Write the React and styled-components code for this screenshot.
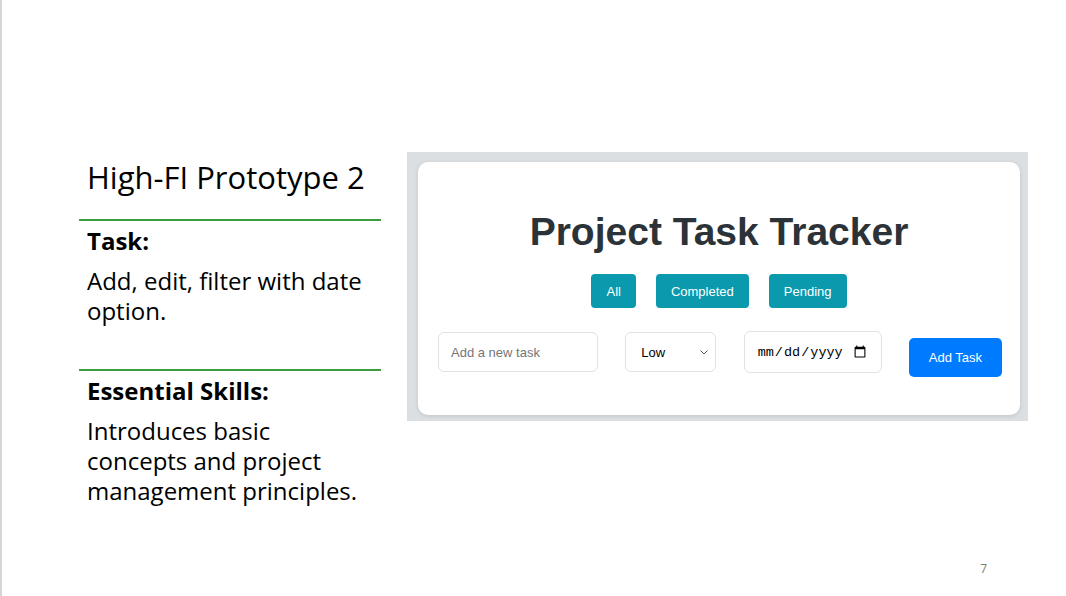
import React, { useState } from 'react';
import styled, { createGlobalStyle } from 'styled-components';

const GlobalStyle = createGlobalStyle`
    body {
        margin: 0;
        background: #fff;
    }
    * {
        box-sizing: border-box;
    }
`;

const Slide = styled.div`
    width: 1066px;
    height: 596px;
    border-left: 2px solid #d6d6d6;
    display: flex;
    flex-direction: column;
    font-family: 'Open Sans', 'Noto Sans', sans-serif;
    color: #000;
    background: #fff;
`;

const Main = styled.div`
    display: flex;
    align-items: flex-start;
    gap: 26px;
    padding: 152px 0 0 77px;
`;

const TextColumn = styled.div`
    width: 302px;
    margin-top: 7px;
`;

const SlideTitle = styled.h1`
    margin: 0;
    padding-left: 8px;
    font-size: 31px;
    font-weight: 400;
    line-height: 36px;
`;

const Divider = styled.div`
    height: 2px;
    background: #3d9c3d;
    margin-top: ${(p) => p.$gap}px;
`;

const Label = styled.div`
    margin-top: 5px;
    padding-left: 8px;
    font-size: 24px;
    font-weight: 700;
    line-height: 30px;
`;

const Body = styled.p`
    margin: 10px 0 0;
    padding-left: 8px;
    max-width: 290px;
    font-size: 24px;
    line-height: 30px;
`;

const Frame = styled.div`
    width: 621px;
    padding: 10px 8px 6px 11px;
    background: #dcdfe2;
`;

const Card = styled.div`
    background: #fff;
    border-radius: 10px;
    box-shadow: 0 1px 4px rgba(0, 0, 0, 0.12);
    padding: 47px 0 38px;
    font-family: 'Liberation Sans', Arial, sans-serif;
`;

const AppTitle = styled.h2`
    margin: 0;
    text-align: center;
    font-size: 39px;
    font-weight: 700;
    line-height: 45px;
    color: #2c3338;
`;

const FilterRow = styled.div`
    display: flex;
    justify-content: center;
    gap: 20px;
    margin-top: 20px;
`;

const FilterButton = styled.button`
    height: 34px;
    padding: 0 15px;
    border: none;
    border-radius: 4px;
    background: #0a99ad;
    color: #fff;
    font-family: inherit;
    font-size: 13px;
    cursor: pointer;
`;

const InputRow = styled.div`
    display: flex;
    justify-content: space-between;
    align-items: flex-start;
    margin-top: 23px;
    padding: 0 18px 0 20px;
`;

const TaskInput = styled.input`
    width: 160px;
    height: 40px;
    margin-top: 1px;
    padding: 0 12px;
    border: 1px solid #dfe3e7;
    border-radius: 6px;
    font-family: inherit;
    font-size: 13px;
    color: #000;
    outline: none;
    &::placeholder {
        color: #757575;
    }
`;

const SelectWrap = styled.div`
    position: relative;
    margin-top: 1px;
`;

const PrioritySelect = styled.select`
    appearance: none;
    width: 91px;
    height: 40px;
    padding: 0 15px;
    border: 1px solid #dfe3e7;
    border-radius: 6px;
    background: #fff;
    font-family: inherit;
    font-size: 13px;
    color: #000;
    outline: none;
`;

const Chevron = styled.svg`
    position: absolute;
    right: 8px;
    top: 18px;
    pointer-events: none;
`;

const DateInput = styled.input`
    width: 138px;
    height: 42px;
    padding: 0 12px;
    border: 1px solid #dfe3e7;
    border-radius: 6px;
    background: #fff;
    font-family: 'Liberation Mono', monospace;
    font-size: 13.5px;
    color: #000;
    outline: none;
`;

const AddButton = styled.button`
    width: 93px;
    height: 39px;
    margin-top: 7px;
    border: none;
    border-radius: 5px;
    background: #007bff;
    color: #fff;
    font-family: inherit;
    font-size: 13px;
    cursor: pointer;
`;

const Footer = styled.div`
    margin-top: auto;
    display: flex;
    justify-content: flex-end;
    padding: 0 79px 19px 0;
    font-size: 12px;
    line-height: 16px;
    color: #7a7a7a;
`;

export default function App() {
    const [filter, setFilter] = useState('all');
    const [task, setTask] = useState('');
    const [priority, setPriority] = useState('low');
    const [date, setDate] = useState('');

    return (
        <>
            <GlobalStyle />
            <Slide>
                <Main>
                    <TextColumn>
                        <SlideTitle>High-FI Prototype 2</SlideTitle>
                        <Divider $gap={24} />
                        <Label>Task:</Label>
                        <Body>Add, edit, filter with date option.</Body>
                        <Divider $gap={43} />
                        <Label>Essential Skills:</Label>
                        <Body>Introduces basic concepts and project management principles.</Body>
                    </TextColumn>
                    <Frame>
                        <Card>
                            <AppTitle>Project Task Tracker</AppTitle>
                            <FilterRow>
                                <FilterButton onClick={() => setFilter('all')}>All</FilterButton>
                                <FilterButton onClick={() => setFilter('completed')}>Completed</FilterButton>
                                <FilterButton onClick={() => setFilter('pending')}>Pending</FilterButton>
                            </FilterRow>
                            <InputRow>
                                <TaskInput
                                    type="text"
                                    placeholder="Add a new task"
                                    value={task}
                                    onChange={(e) => setTask(e.target.value)}
                                />
                                <SelectWrap>
                                    <PrioritySelect value={priority} onChange={(e) => setPriority(e.target.value)}>
                                        <option value="low">Low</option>
                                        <option value="medium">Medium</option>
                                        <option value="high">High</option>
                                    </PrioritySelect>
                                    <Chevron width="8" height="5" viewBox="0 0 8 5">
                                        <path d="M0.5 0.5 L4 4 L7.5 0.5" fill="none" stroke="#555" strokeWidth="1" />
                                    </Chevron>
                                </SelectWrap>
                                <DateInput type="date" value={date} onChange={(e) => setDate(e.target.value)} />
                                <AddButton data-filter={filter}>Add Task</AddButton>
                            </InputRow>
                        </Card>
                    </Frame>
                </Main>
                <Footer>7</Footer>
            </Slide>
        </>
    );
}
